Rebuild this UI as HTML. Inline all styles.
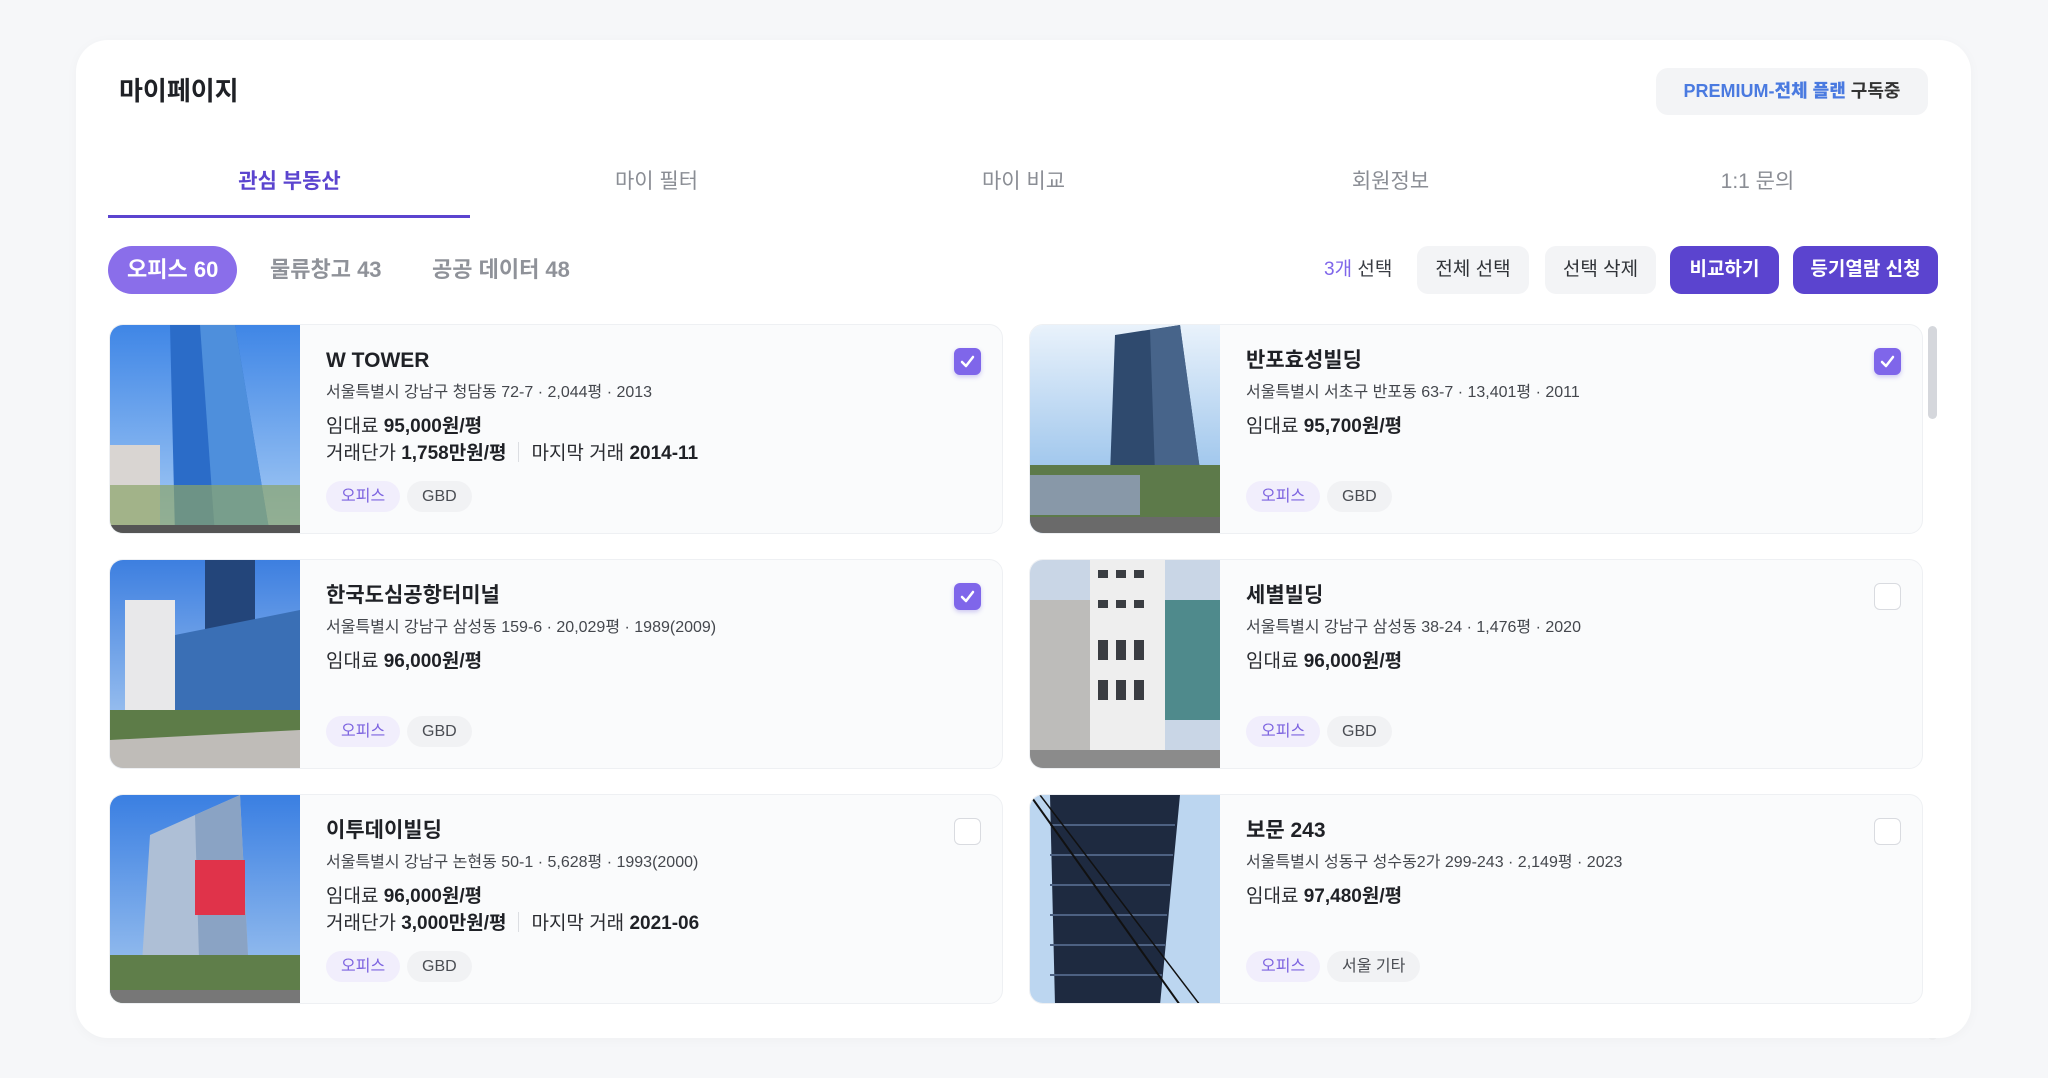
<!DOCTYPE html>
<html><head><meta charset="utf-8"><style>
*{box-sizing:border-box;margin:0;padding:0}
body{width:2048px;height:1078px;background:#f6f7f9;font-family:"Liberation Sans","Noto Sans CJK KR",sans-serif;color:#1f2126;position:relative;overflow:hidden}
.panel{position:absolute;left:76px;top:40px;width:1895px;height:998px;background:#fff;border-radius:32px;box-shadow:0 2px 12px rgba(0,0,0,.03)}
.abs{position:absolute}
.title{left:43px;top:35px;font-size:26px;font-weight:700;line-height:32px}
.prem{left:1580px;top:28px;width:272px;height:47px;background:#f3f4f6;border-radius:12px;font-size:18px;font-weight:700;line-height:47px;text-align:center;color:#333}
.prem b{color:#4a7ae0}
.tab{top:126px;width:367px;text-align:center;font-size:21px;color:#8a8d94;line-height:32px}
.tab.on{color:#5b44cf;font-weight:700}
.uline{left:32px;top:175px;width:362px;height:3px;background:#5b44cf}
.pill{top:206px;height:48px;line-height:48px;font-size:22px;color:#8f9299;font-weight:600}
.pill.on{background:#8a6eea;color:#fff;border-radius:24px;padding:0 19px;left:32px}
.btn{top:206px;height:48px;line-height:48px;border-radius:11px;font-size:19px;text-align:center;font-weight:400;background:#f3f4f6;color:#2f3237}
.btn.p{background:#5b44cf;color:#fff;font-weight:600}
.card{position:absolute;width:894px;height:210px;background:#fafbfc;border:1px solid #eef0f3;border-radius:14px;overflow:hidden}
.card svg.img{position:absolute;left:0;top:0;width:190px;height:210px}
.nm{position:absolute;left:216px;top:22px;font-size:21px;font-weight:600;line-height:28px}
.ad{position:absolute;left:216px;top:56px;font-size:16px;color:#44474d;line-height:24px}
.l1{position:absolute;left:216px;top:89px;font-size:19px;color:#2a2c31;line-height:26px}
.l2{position:absolute;left:216px;top:116px;font-size:19px;color:#2a2c31;line-height:26px}
.l1 b,.l2 b{font-weight:700;color:#1f2126}
.sep{display:inline-block;width:1px;height:20px;background:#dcdee2;vertical-align:-3px;margin:0 12px}
.tg{position:absolute;top:156px;height:31px;line-height:31px;border-radius:16px;font-size:16px;padding:0 15px}
.t1{left:216px;background:#f1eefc;color:#7d64e0}
.t2{left:297px;background:#f1f2f4;color:#4a4d53}
.cb{position:absolute;right:21px;top:23px;width:27px;height:27px;border-radius:6px;border:1.5px solid #d9dbe0;background:#fff}
.cb.on{background:#7f66ea;border:none;box-shadow:0 2px 5px rgba(100,80,220,.3)}
</style></head><body>
<div class="panel">
<div class="abs title">마이페이지</div>
<div class="abs prem"><b>PREMIUM-전체 플랜</b> 구독중</div>
<div class="abs tab on" style="left:30px">관심 부동산</div>
<div class="abs tab" style="left:397px">마이 필터</div>
<div class="abs tab" style="left:764px">마이 비교</div>
<div class="abs tab" style="left:1131px">회원정보</div>
<div class="abs tab" style="left:1498px">1:1 문의</div>
<div class="abs uline"></div>
<div class="abs pill on">오피스 60</div>
<div class="abs pill" style="left:194px">물류창고 43</div>
<div class="abs pill" style="left:356px">공공 데이터 48</div>
<div class="abs" style="left:1248px;top:206px;line-height:48px;font-size:19px;color:#3a3d44"><span style="color:#7f66ea">3개</span> 선택</div>
<div class="abs btn" style="left:1341px;width:112px">전체 선택</div>
<div class="abs btn" style="left:1469px;width:111px">선택 삭제</div>
<div class="abs btn p" style="left:1594px;width:109px">비교하기</div>
<div class="abs btn p" style="left:1717px;width:145px">등기열람 신청</div>
<div class="abs" style="left:1852px;top:286px;width:9px;height:93px;border-radius:5px;background:#d5d7dc"></div>
<div class="abs" style="left:1852px;top:286px;width:9px;height:714px;border-radius:5px;background:#f0f1f3;z-index:-1"></div>
</div>

<div class="card" style="left:109px;top:324px">
<svg class="img" viewBox="0 0 190 210" preserveAspectRatio="none"><defs><linearGradient id="s1" x1="0" y1="0" x2="0" y2="1"><stop offset="0" stop-color="#3f86e6"/><stop offset="1" stop-color="#a9cdf5"/></linearGradient></defs><rect width="190" height="210" fill="url(#s1)"/><polygon points="60,0 125,0 160,210 65,210" fill="#2b6cc8"/><polygon points="90,0 125,0 160,210 105,210" fill="#4e8fdc"/><rect x="0" y="120" width="50" height="90" fill="#d9d5d2"/><rect x="0" y="160" width="190" height="50" fill="#8aa46a" opacity=".7"/><rect x="0" y="200" width="190" height="10" fill="#555"/></svg>
<div class="nm">W TOWER</div><div class="ad">서울특별시 강남구 청담동 72-7 · 2,044평 · 2013</div>
<div class="l1">임대료 <b>95,000원/평</b></div><div class="l2">거래단가 <b>1,758만원/평</b><span class="sep"></span>마지막 거래 <b>2014-11</b></div>
<div class="tg t1">오피스</div><div class="tg t2">GBD</div>
<div class="cb on"><svg width="27" height="27"><path d="M8 14l4 4 7-9" stroke="#fff" stroke-width="2.5" fill="none" stroke-linecap="round" stroke-linejoin="round"/></svg></div>
</div>

<div class="card" style="left:1029px;top:324px">
<svg class="img" viewBox="0 0 190 210" preserveAspectRatio="none"><defs><linearGradient id="s2" x1="0" y1="0" x2="0" y2="1"><stop offset="0" stop-color="#e9f2fb"/><stop offset="1" stop-color="#7fb3e6"/></linearGradient></defs><rect width="190" height="210" fill="url(#s2)"/><polygon points="85,10 150,0 170,145 80,150" fill="#2f4a6e"/><polygon points="120,5 150,0 170,145 125,148" fill="#47648a"/><rect x="0" y="140" width="190" height="55" fill="#5d7a4a"/><rect x="0" y="150" width="110" height="40" fill="#8898a8"/><rect x="0" y="192" width="190" height="18" fill="#6a6a6a"/></svg>
<div class="nm">반포효성빌딩</div><div class="ad">서울특별시 서초구 반포동 63-7 · 13,401평 · 2011</div>
<div class="l1">임대료 <b>95,700원/평</b></div>
<div class="tg t1">오피스</div><div class="tg t2">GBD</div>
<div class="cb on"><svg width="27" height="27"><path d="M8 14l4 4 7-9" stroke="#fff" stroke-width="2.5" fill="none" stroke-linecap="round" stroke-linejoin="round"/></svg></div>
</div>

<div class="card" style="left:109px;top:559px">
<svg class="img" viewBox="0 0 190 210" preserveAspectRatio="none"><defs><linearGradient id="s3" x1="0" y1="0" x2="0" y2="1"><stop offset="0" stop-color="#3d7fe0"/><stop offset="1" stop-color="#b6d3f3"/></linearGradient></defs><rect width="190" height="210" fill="url(#s3)"/><rect x="95" y="0" width="50" height="120" fill="#23457a"/><polygon points="40,80 190,50 190,160 40,165" fill="#3a6fb5"/><rect x="15" y="40" width="50" height="130" fill="#e8e8ea"/><rect x="0" y="150" width="190" height="30" fill="#5d7c48"/><polygon points="0,180 190,170 190,210 0,210" fill="#bfbcb8"/></svg>
<div class="nm">한국도심공항터미널</div><div class="ad">서울특별시 강남구 삼성동 159-6 · 20,029평 · 1989(2009)</div>
<div class="l1">임대료 <b>96,000원/평</b></div>
<div class="tg t1">오피스</div><div class="tg t2">GBD</div>
<div class="cb on"><svg width="27" height="27"><path d="M8 14l4 4 7-9" stroke="#fff" stroke-width="2.5" fill="none" stroke-linecap="round" stroke-linejoin="round"/></svg></div>
</div>

<div class="card" style="left:1029px;top:559px">
<svg class="img" viewBox="0 0 190 210" preserveAspectRatio="none"><rect width="190" height="210" fill="#c9d6e6"/><rect x="0" y="40" width="70" height="150" fill="#bdbcba"/><rect x="60" y="0" width="75" height="195" fill="#eeeeee"/><g fill="#3a3d42"><rect x="68" y="10" width="10" height="8"/><rect x="86" y="10" width="10" height="8"/><rect x="104" y="10" width="10" height="8"/><rect x="68" y="40" width="10" height="8"/><rect x="86" y="40" width="10" height="8"/><rect x="104" y="40" width="10" height="8"/><rect x="68" y="80" width="10" height="20"/><rect x="86" y="80" width="10" height="20"/><rect x="104" y="80" width="10" height="20"/><rect x="68" y="120" width="10" height="20"/><rect x="86" y="120" width="10" height="20"/><rect x="104" y="120" width="10" height="20"/></g><rect x="135" y="40" width="55" height="120" fill="#4f8a8c"/><rect x="0" y="190" width="190" height="20" fill="#8b8b8b"/></svg>
<div class="nm">세별빌딩</div><div class="ad">서울특별시 강남구 삼성동 38-24 · 1,476평 · 2020</div>
<div class="l1">임대료 <b>96,000원/평</b></div>
<div class="tg t1">오피스</div><div class="tg t2">GBD</div>
<div class="cb"></div>
</div>

<div class="card" style="left:109px;top:794px">
<svg class="img" viewBox="0 0 190 210" preserveAspectRatio="none"><defs><linearGradient id="s5" x1="0" y1="0" x2="0" y2="1"><stop offset="0" stop-color="#3a7fe2"/><stop offset="1" stop-color="#a7c9f0"/></linearGradient></defs><rect width="190" height="210" fill="url(#s5)"/><polygon points="40,40 130,0 140,200 30,200" fill="#aebfd6"/><polygon points="85,20 130,0 140,200 90,200" fill="#8aa3c4"/><rect x="85" y="65" width="50" height="55" fill="#e0334a"/><rect x="0" y="160" width="190" height="50" fill="#5f7e4a"/><rect x="0" y="195" width="190" height="15" fill="#777"/></svg>
<div class="nm">이투데이빌딩</div><div class="ad">서울특별시 강남구 논현동 50-1 · 5,628평 · 1993(2000)</div>
<div class="l1">임대료 <b>96,000원/평</b></div><div class="l2">거래단가 <b>3,000만원/평</b><span class="sep"></span>마지막 거래 <b>2021-06</b></div>
<div class="tg t1">오피스</div><div class="tg t2">GBD</div>
<div class="cb"></div>
</div>

<div class="card" style="left:1029px;top:794px">
<svg class="img" viewBox="0 0 190 210" preserveAspectRatio="none"><rect width="190" height="210" fill="#bcd6f0"/><polygon points="20,0 150,0 130,210 25,210" fill="#1e2a40"/><g stroke="#4d6182" stroke-width="2"><line x1="20" y1="30" x2="145" y2="30"/><line x1="20" y1="60" x2="143" y2="60"/><line x1="20" y1="90" x2="140" y2="90"/><line x1="20" y1="120" x2="137" y2="120"/><line x1="20" y1="150" x2="135" y2="150"/><line x1="20" y1="180" x2="132" y2="180"/></g><line x1="0" y1="0" x2="150" y2="210" stroke="#111" stroke-width="2"/><line x1="10" y1="0" x2="170" y2="210" stroke="#111" stroke-width="1.5"/></svg>
<div class="nm">보문 243</div><div class="ad">서울특별시 성동구 성수동2가 299-243 · 2,149평 · 2023</div>
<div class="l1">임대료 <b>97,480원/평</b></div>
<div class="tg t1">오피스</div><div class="tg t2">서울 기타</div>
<div class="cb"></div>
</div>
</body></html>
